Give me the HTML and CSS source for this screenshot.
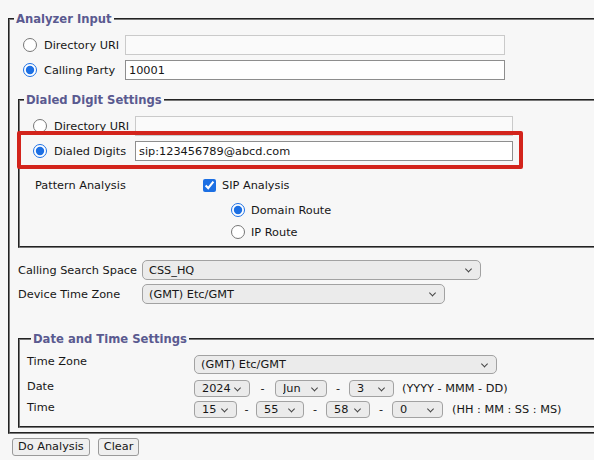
FILE: index.html
```html
<!DOCTYPE html>
<html>
<head>
<meta charset="utf-8">
<title>Dialed Number Analyzer</title>
<link rel="stylesheet" href="styles.css">
</head>
<body>
<div class="page">
  <div class="frame">
  <fieldset class="outer">
    <legend>Analyzer Input</legend>
    <div class="row radio-row">
      <input type="radio" class="radio" name="ai">
      <label class="rlabel">Directory URI</label>
      <input type="text" class="text text-light wide">
    </div>
    <div class="row radio-row gap5">
      <input type="radio" class="radio" name="ai" checked>
      <label class="rlabel">Calling Party</label>
      <input type="text" class="text wide" value="10001">
    </div>

    <fieldset class="dialed">
      <legend>Dialed Digit Settings</legend>
      <div class="row radio-row">
        <input type="radio" class="radio" name="dd">
        <label class="rlabel">Directory URI</label>
        <input type="text" class="text text-light narrow">
      </div>
      <div class="row radio-row gap5">
        <input type="radio" class="radio" name="dd" checked>
        <label class="rlabel">Dialed Digits</label>
        <input type="text" class="text narrow" value="sip:123456789@abcd.com">
      </div>
      <div class="row pattern-row">
        <span class="plabel">Pattern Analysis</span>
        <input type="checkbox" class="check" checked>
        <span class="clabel">SIP Analysis</span>
      </div>
      <div class="row sub-row gap5">
        <input type="radio" class="radio" name="route" checked>
        <span class="clabel">Domain Route</span>
      </div>
      <div class="row sub-row gap2">
        <input type="radio" class="radio" name="route">
        <span class="clabel">IP Route</span>
      </div>
    </fieldset>

    <div class="row field-row first">
      <span class="flabel">Calling Search Space</span>
      <span class="sel sel-main"><select class="w-css"><option>CSS_HQ</option></select></span>
    </div>
    <div class="row field-row gap4">
      <span class="flabel">Device Time Zone</span>
      <span class="sel sel-main"><select class="w-dtz"><option>(GMT) Etc/GMT</option></select></span>
    </div>

    <fieldset class="datetime">
      <legend>Date and Time Settings</legend>
      <div class="dt-row">
        <span class="dlabel">Time Zone</span>
        <span class="sel sel-main"><select class="w-tz"><option>(GMT) Etc/GMT</option></select></span>
      </div>
      <div class="dt-row gap6">
        <span class="dlabel">Date</span>
        <span class="sel sel-small"><select class="w56"><option>2024</option></select></span>
        <span class="sep s25">-</span>
        <span class="sel sel-small"><select class="w52"><option>Jun</option></select></span>
        <span class="sep s22">-</span>
        <span class="sel sel-small"><select class="w45"><option>3</option></select></span>
        <span class="hint h8">(YYYY - MMM - DD)</span>
      </div>
      <div class="dt-row gap4">
        <span class="dlabel">Time</span>
        <span class="sel sel-small"><select class="w43"><option>15</option></select></span>
        <span class="sep s19">-</span>
        <span class="sel sel-small"><select class="w48"><option>55</option></select></span>
        <span class="sep s22">-</span>
        <span class="sel sel-small"><select class="w44"><option>58</option></select></span>
        <span class="sep s22">-</span>
        <span class="sel sel-small"><select class="w51"><option>0</option></select></span>
        <span class="hint h9">(HH : MM : SS : MS)</span>
      </div>
    </fieldset>
  </fieldset>

  <div class="buttons">
    <button type="button" class="btn">Do Analysis</button>
    <button type="button" class="btn">Clear</button>
  </div>
  </div>

  <div class="highlight"></div>
</div>
</body>
</html>
```
FILE: styles.css
```css
* { box-sizing: border-box; }
html, body { margin: 0; background: #f7f7f7; overflow: hidden; }
body {
  font-family: "DejaVu Sans", Verdana, sans-serif;
  font-size: 11.3px;
  color: #161616;
}
.page { position: relative; width: 594px; height: 460px; overflow: hidden; }
.frame { width: 690px; padding: 12px 0 0 8px; }

fieldset { margin: 0; border: 2px groove #777; min-width: 0; }
legend {
  padding: 0 2px;
  margin-left: 4px;
  font-weight: bold;
  font-size: 11.6px;
  color: #5a5a90;
  line-height: 14px;
}
.outer { padding: 9px 0 4px 0; }
.dialed { margin: 13px 0 0 8px; padding: 9px 0 4px 0; }
.datetime { margin: 28px 0 0 8px; padding: 9px 0 8px 7px; }

.row { display: flex; align-items: center; height: 20px; }
.gap2 { margin-top: 2px; }
.gap4 { margin-top: 4px; }
.gap5 { margin-top: 5px; }
.gap6 { margin-top: 6px; }

.radio {
  width: 14px; height: 14px; margin: 0;
  accent-color: #1c6fe3;
  flex: none;
}
.check {
  width: 13px; height: 13px; margin: 0;
  accent-color: #1c6fe3;
  flex: none;
}
.radio-row { padding-left: 13px; }
.rlabel { width: 81px; margin-left: 7px; flex: none; }

.text {
  height: 20px;
  border: 1px solid #8e8e8e;
  background: #fff;
  font: inherit;
  color: #161616;
  padding: 0 3px;
  outline: none;
}
.text-light { border-color: #cacaca; background: #fafafa; }
.wide { width: 380px; }
.narrow { width: 378px; }

.pattern-row { margin-top: 14px; padding-left: 15px; }
.plabel { width: 168px; flex: none; }
.clabel { margin-left: 6px; }
.sub-row { padding-left: 211px; }

.field-row { padding-left: 8px; }
.field-row.first { margin-top: 12px; }
.flabel { width: 124px; flex: none; }

.sel { position: relative; display: inline-block; flex: none; }
.sel select {
  appearance: none;
  -webkit-appearance: none;
  font: inherit;
  color: #161616;
  background: #ebebeb;
  border: 1px solid #a2a2a2;
  border-radius: 5px;
  margin: 0;
  display: block;
  outline: none;
}
.sel::after {
  content: "";
  position: absolute;
  top: 50%;
  width: 4px; height: 4px;
  border-right: 1.3px solid #444;
  border-bottom: 1.3px solid #444;
  transform: translateY(-70%) rotate(45deg);
  pointer-events: none;
}
.sel-main select { height: 20px; padding: 0 6px; }
.sel-main::after { right: 10px; }
.sel-small select { height: 17px; padding: 0 7px; border-radius: 4px; }
.sel-small::after { right: 10px; }
.w-css { width: 339px; }
.w-dtz { width: 303px; }
.w-tz { width: 303px; }
.sel-main .w-tz { height: 19px; }
.w56 { width: 56px; }
.w52 { width: 52px; }
.w45 { width: 45px; }
.w43 { width: 43px; }
.w48 { width: 48px; }
.w44 { width: 44px; }
.w51 { width: 51px; }

.dt-row { display: flex; align-items: flex-start; }
.dlabel { width: 167px; flex: none; line-height: 14px; }
.sep { flex: none; text-align: center; line-height: 17px; }
.s19 { width: 19px; }
.s22 { width: 22px; }
.s25 { width: 25px; }
.hint { line-height: 17px; }
.h8 { margin-left: 8px; }
.h9 { margin-left: 9px; }

.buttons { display: flex; gap: 8px; margin-top: 4px; padding-left: 4px; }
.btn {
  font: inherit;
  color: #161616;
  height: 18px;
  padding: 0 5px;
  border: 1px solid #9a9a9a;
  border-radius: 3px;
  background: #efefef;
  line-height: 16px;
}

.highlight {
  position: absolute;
  left: 17px; top: 131px;
  width: 506px; height: 38px;
  border: 4px solid #d3241c;
  border-radius: 2px;
  pointer-events: none;
}
```
